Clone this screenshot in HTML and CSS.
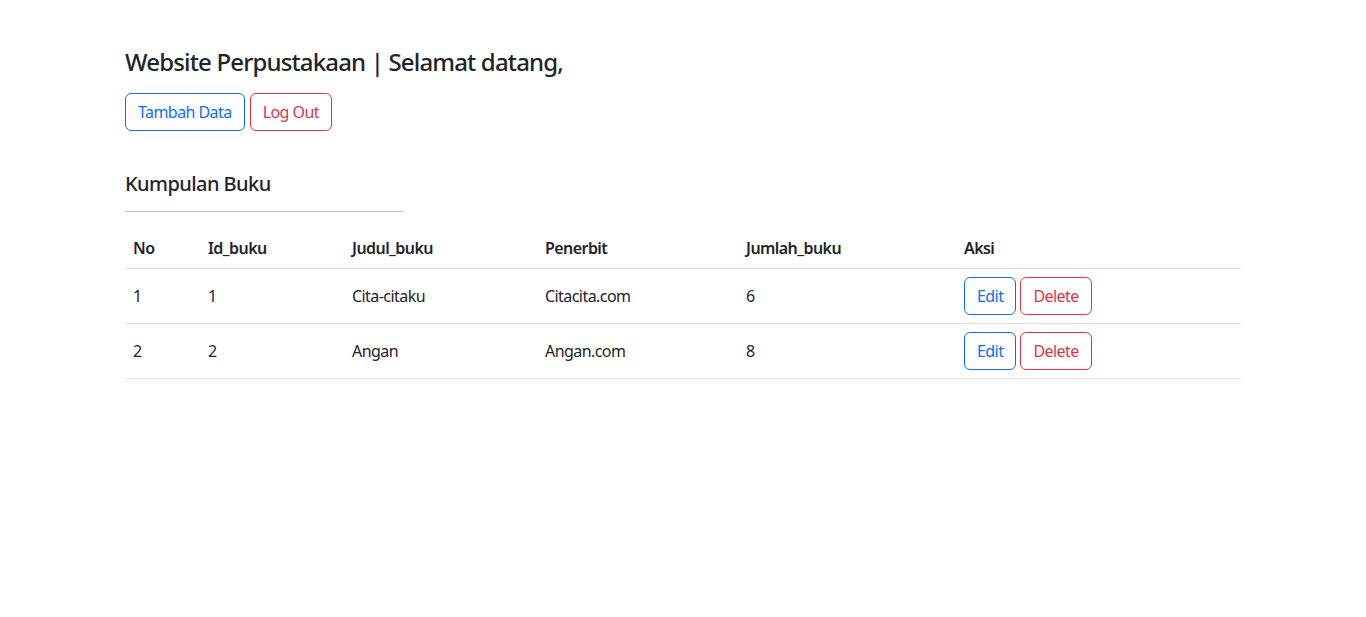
FILE: index.html
```html
<!DOCTYPE html>
<html lang="id">
<head>
<meta charset="utf-8">
<title>Website Perpustakaan</title>
<link rel="stylesheet" href="styles.css">
</head>
<body>
<div class="container">
  <h4 class="title">Website Perpustakaan | Selamat datang,</h4>
  <div class="actions">
    <a class="btn btn-primary-outline" href="#">Tambah Data</a>
    <a class="btn btn-danger-outline" href="#">Log Out</a>
  </div>
  <h5 class="subtitle">Kumpulan Buku</h5>
  <hr class="divider">
  <table class="table">
    <colgroup>
      <col class="c-no"><col class="c-id"><col class="c-judul"><col class="c-penerbit"><col class="c-jumlah"><col class="c-aksi">
    </colgroup>
    <thead>
      <tr><th>No</th><th>Id_buku</th><th>Judul_buku</th><th>Penerbit</th><th>Jumlah_buku</th><th>Aksi</th></tr>
    </thead>
    <tbody>
      <tr>
        <td>1</td><td>1</td><td>Cita-citaku</td><td>Citacita.com</td><td>6</td>
        <td class="aksi"><a class="btn btn-primary-outline" href="#">Edit</a> <a class="btn btn-danger-outline" href="#">Delete</a></td>
      </tr>
      <tr>
        <td>2</td><td>2</td><td>Angan</td><td>Angan.com</td><td>8</td>
        <td class="aksi"><a class="btn btn-primary-outline" href="#">Edit</a> <a class="btn btn-danger-outline" href="#">Delete</a></td>
      </tr>
    </tbody>
  </table>
</div>
</body>
</html>
```

FILE: styles.css
```css
* { box-sizing: border-box; }
body {
  margin: 0;
  font-family: "Noto Sans", "Open Sans", sans-serif;
  font-size: 16px;
  line-height: 1.5;
  letter-spacing: -0.035em;
  color: #212529;
  background: #fff;
}
.container {
  max-width: 1140px;
  margin: 0 auto;
  padding: 48px 12px 0;
}
.title {
  margin: 0 0 16px;
  font-size: 24px;
  font-weight: 500;
  line-height: 1.2;
  letter-spacing: -0.035em;
}
.actions { font-size: 0; display: flex; gap: 5px; }
.btn {
  display: inline-block;
  padding: 6px 12px;
  font-size: 16px;
  line-height: 24px;
  border: 1px solid;
  border-radius: 6px;
  text-decoration: none;
  background: transparent;
}
.btn-primary-outline { color: #0d6efd; border-color: #0d6efd; }
.btn-danger-outline { color: #dc3545; border-color: #dc3545; }
.subtitle {
  margin: 41px 0 0;
  font-size: 20px;
  font-weight: 500;
  line-height: 1.2;
}
.divider {
  width: 25%;
  margin: 15px 0 16px;
  border: 0;
  border-top: 1px solid #c4c5c6;
  height: 0;
}
.table {
  width: 100%;
  border-collapse: collapse;
  table-layout: fixed;
}
.c-no { width: 75px; }
.c-id { width: 144px; }
.c-judul { width: 193px; }
.c-penerbit { width: 201px; }
.c-jumlah { width: 218px; }
.table th, .table td {
  padding: 8px;
  text-align: left;
  border-bottom: 1px solid #dee2e6;
}
.table th { font-weight: 600; vertical-align: top; }
.table td { vertical-align: middle; }
.table td.aksi { font-size: 0; }
.table td.aksi .btn + .btn { margin-left: 4px; }
```
